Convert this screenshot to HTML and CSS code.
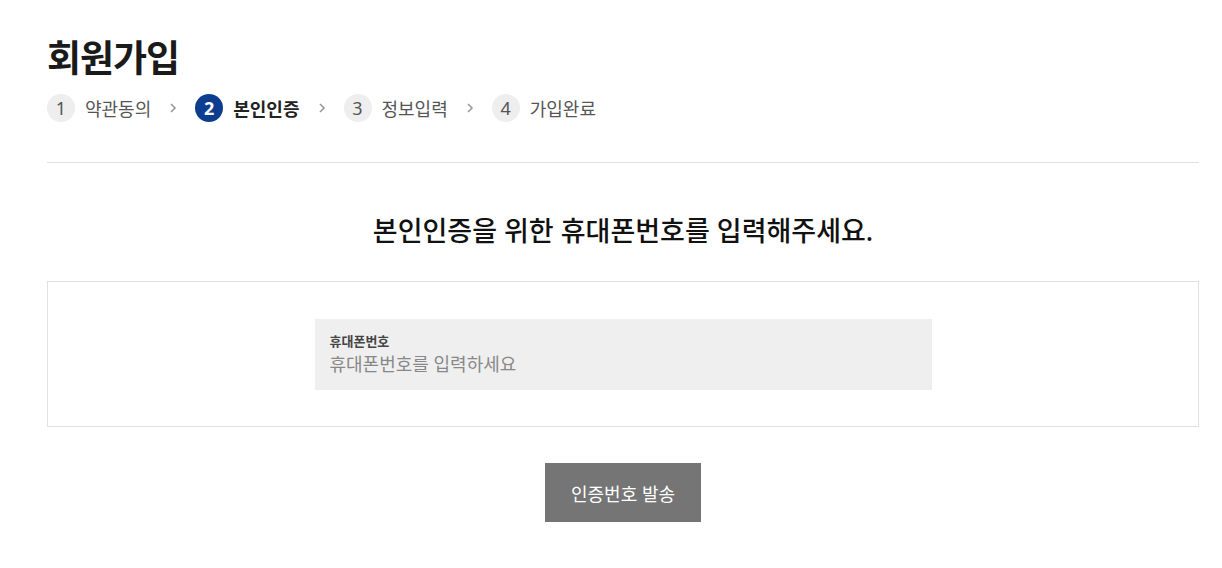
FILE: index.html
```html
<!DOCTYPE html>
<html lang="ko">

<head>
    <meta charset="UTF-8" />
    <meta name="viewport" content="width=device-width, initial-scale=1.0" />
    <title>회원가입</title>
    <link rel="stylesheet" href="styles.css">
</head>

<body>
    <div class="container">
        <h1>회원가입</h1>
        <ol class="steps">
            <li class="step"><span class="num">1</span>약관동의</li>
            <li class="sep"><svg width="8" height="12" viewBox="0 0 8 12"><path d="M2 2l4 4-4 4" fill="none" stroke="#999" stroke-width="1.6"/></svg></li>
            <li class="step active"><span class="num">2</span>본인인증</li>
            <li class="sep"><svg width="8" height="12" viewBox="0 0 8 12"><path d="M2 2l4 4-4 4" fill="none" stroke="#999" stroke-width="1.6"/></svg></li>
            <li class="step"><span class="num">3</span>정보입력</li>
            <li class="sep"><svg width="8" height="12" viewBox="0 0 8 12"><path d="M2 2l4 4-4 4" fill="none" stroke="#999" stroke-width="1.6"/></svg></li>
            <li class="step"><span class="num">4</span>가입완료</li>
        </ol>

        <h2 class="lead">본인인증을 위한 휴대폰번호를 입력해주세요.</h2>

        <div class="form-box">
            <label class="field">
                <span class="field-label">휴대폰번호</span>
                <input type="tel" placeholder="휴대폰번호를 입력하세요" />
            </label>
        </div>

        <div class="actions">
            <button class="send-btn">인증번호 발송</button>
        </div>
    </div>
</body>

</html>
```

FILE: styles.css
```css
* {
    padding: 0;
    margin: 0;
    box-sizing: border-box;
    font-family: "Noto Sans", "Noto Sans CJK KR", sans-serif;
}

body {
    background-color: #fff;
    color: #222;
}

.container {
    width: 1152px;
    margin-left: 47px;
    padding-top: 34px;
}

h1 {
    font-size: 37px;
    font-weight: 700;
    line-height: 48px;
    color: #1a1a1a;
    letter-spacing: -1px;
}

.steps {
    list-style: none;
    display: flex;
    align-items: center;
    height: 28px;
    margin-top: 12px;
    padding-bottom: 40px;
    border-bottom: 1px solid #e1e1e1;
    box-sizing: content-box;
}

.step {
    display: flex;
    align-items: center;
    gap: 10px;
    font-size: 18px;
    color: #555;
}

.step .num {
    width: 28px;
    height: 28px;
    border-radius: 50%;
    background-color: #eee;
    color: #555;
    display: flex;
    align-items: center;
    justify-content: center;
    font-size: 18px;
    font-weight: 400;
}

.step.active {
    color: #222;
    font-weight: 700;
}

.step.active .num {
    background-color: #0d3d8f;
    color: #fff;
    font-weight: 700;
}

.sep {
    display: flex;
    align-items: center;
    margin: 0 18px;
}

.lead {
    text-align: center;
    font-size: 27px;
    font-weight: 500;
    color: #111;
    margin-top: 50px;
    line-height: 36px;
}

.form-box {
    margin-top: 32px;
    border: 1px solid #e1e1e1;
    height: 146px;
    display: flex;
    align-items: center;
    justify-content: center;
}

.field {
    width: 617px;
    height: 71px;
    background-color: #efefef;
    padding: 13px 15px 0;
    display: flex;
    flex-direction: column;
}

.field-label {
    font-size: 13px;
    font-weight: 700;
    color: #444;
    line-height: 18px;
}

.field input {
    border: none;
    background: transparent;
    outline: none;
    font-size: 18px;
    color: #333;
    height: 28px;
}

.field input::placeholder {
    color: #888;
}

.actions {
    display: flex;
    justify-content: center;
    margin-top: 36px;
}

.send-btn {
    width: 156px;
    height: 59px;
    background-color: #757575;
    color: #fff;
    border: none;
    font-size: 18px;
    font-weight: 400;
    cursor: pointer;
}
```
